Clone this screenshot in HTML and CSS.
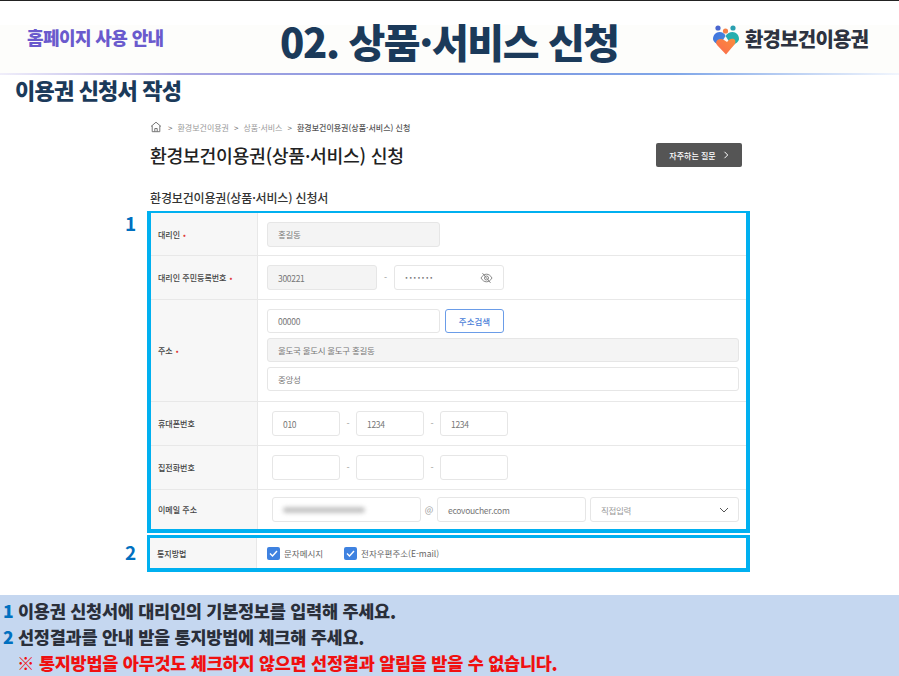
FILE: index.html
```html
<!DOCTYPE html>
<html lang="ko">
<head>
    <meta charset="UTF-8">
    <title>이용권 신청서 작성</title>
    <link rel="stylesheet" href="styles.css">
</head>
<body>
    <div class="slide-top">
        <div class="header">
            <div class="guide">홈페이지 사용 안내</div>
            <h1>02. 상품·서비스 신청</h1>
            <div class="logo">
                <svg width="28" height="30" viewBox="0 0 28 30">
                    <defs>
                        <linearGradient id="lobe-left" x1="0" y1="0" x2="1" y2="1">
                            <stop offset="0" stop-color="#3f6fe0"/>
                            <stop offset="1" stop-color="#4a90d8"/>
                        </linearGradient>
                        <linearGradient id="lobe-right" x1="0" y1="0" x2="1" y2="1">
                            <stop offset="0" stop-color="#27a9b5"/>
                            <stop offset="1" stop-color="#22b5a5"/>
                        </linearGradient>
                        <linearGradient id="lobe-low" x1="1" y1="0" x2="0" y2="1">
                            <stop offset="0" stop-color="#fb8c3c"/>
                            <stop offset="1" stop-color="#fb6a4e"/>
                        </linearGradient>
                    </defs>
                    <circle cx="6" cy="3" r="2.600" fill="#4a66cf"/>
                    <circle cx="13.500" cy="6" r="2.600" fill="#f58048"/>
                    <circle cx="21" cy="3" r="2.600" fill="#2a9fb0"/>
                    <path d="M1 14c0-4 3-7 6.500-7 3 0 5 1.500 6 4l-6 10-4.500-3.500C1.500 16 1 15 1 14z" fill="url(#lobe-left)"/>
                    <path d="M27 14c0-4-3-7-6.500-7-3 0-5 1.500-7 4l6.500 10 5-3.500c1.500-1.500 2-2.500 2-3.500z" fill="url(#lobe-right)"/>
                    <path d="M14 29.500 5 20c-1.500-2-1-4 .5-5 2-1.500 4.500-1.500 6.500 0l3 2c2-3 4.500-4 7-3 1.500 1 2 3 .5 5.500z" fill="url(#lobe-low)"/>
                </svg>
                <span>환경보건이용권</span>
            </div>
        </div>
        <div class="header-line"></div>
    </div>
    <h2 class="section-title">이용권 신청서 작성</h2>

    <div class="page">
        <div class="breadcrumb">
            <svg class="home" width="12" height="12" viewBox="0 0 12 12" fill="none" stroke="#777" stroke-width="1">
                <path d="M1 5.500 6 1.200l5 4.300M2.200 4.700v6h7.600v-6M4.800 10.700V7.500h2.400v3.200"/>
            </svg>
            <span class="sep">&gt;</span><span>환경보건이용권</span>
            <span class="sep">&gt;</span><span>상품·서비스</span>
            <span class="sep">&gt;</span><span class="current">환경보건이용권(상품·서비스) 신청</span>
        </div>
        <div class="title-row">
            <h3>환경보건이용권(상품·서비스) 신청</h3>
            <a class="faq">자주하는 질문 <svg width="6" height="8" viewBox="0 0 6 8" fill="none" stroke="#fff" stroke-width="1"><path d="M1.500 .8 4.700 4 1.500 7.200"/></svg></a>
        </div>
        <h4>환경보건이용권(상품·서비스) 신청서</h4>
    </div>

    <div class="form-wrap">
        <div class="group group-one">
            <span class="num">1</span>
            <div class="row row-first">
                <div class="label">대리인 <i>•</i></div>
                <div class="cell">
                    <div class="input off w-173">홍길동</div>
                </div>
            </div>
            <div class="row row-std">
                <div class="label">대리인 주민등록번호 <i>•</i></div>
                <div class="cell">
                    <div class="input off w-110">300221</div>
                    <span class="dash dash-wide">-</span>
                    <div class="input w-110 secret">
                        <span>·······</span>
                        <svg width="13" height="12" viewBox="0 0 13 12" fill="none" stroke="#888" stroke-width="1">
                            <path d="M1 6c1.500-2.500 3.300-3.800 5.500-3.800S10.500 3.500 12 6c-1.500 2.500-3.300 3.800-5.500 3.800S2.500 8.500 1 6z"/>
                            <circle cx="6.500" cy="6" r="2"/>
                            <path d="M2.500 1.200l8 9.600"/>
                        </svg>
                    </div>
                </div>
            </div>
            <div class="row row-addr">
                <div class="label">주소 <i>•</i></div>
                <div class="cell addr">
                    <div class="addr-top">
                        <div class="input w-173">00000</div>
                        <div class="btn-search">주소검색</div>
                    </div>
                    <div class="input off">울도국 울도시 울도구 홍길동</div>
                    <div class="input">중앙성</div>
                </div>
            </div>
            <div class="row row-std">
                <div class="label">휴대폰번호</div>
                <div class="cell inset">
                    <div class="input w-68">010</div>
                    <span class="dash">-</span>
                    <div class="input w-68">1234</div>
                    <span class="dash">-</span>
                    <div class="input w-68">1234</div>
                </div>
            </div>
            <div class="row row-std">
                <div class="label">집전화번호</div>
                <div class="cell inset">
                    <div class="input w-68"></div>
                    <span class="dash">-</span>
                    <div class="input w-68"></div>
                    <span class="dash">-</span>
                    <div class="input w-68"></div>
                </div>
            </div>
            <div class="row row-last">
                <div class="label">이메일 주소</div>
                <div class="cell inset">
                    <div class="input w-149"><span class="blurred"></span></div>
                    <span class="at">@</span>
                    <div class="input w-149">ecovoucher.com</div>
                    <div class="input w-149 select">
                        <span>직접입력</span>
                        <svg width="10" height="6" viewBox="0 0 10 6" fill="none" stroke="#555" stroke-width="1"><path d="M1 1l4 4 4-4"/></svg>
                    </div>
                </div>
            </div>
        </div>

        <div class="group group-two">
            <span class="num">2</span>
            <div class="row row-notify">
                <div class="label">통지방법</div>
                <div class="cell">
                    <label class="check"><b class="box"><svg width="9" height="7" viewBox="0 0 9 7" fill="none" stroke="#fff" stroke-width="1.400"><path d="M1 3.500 3.500 6 8 1"/></svg></b>문자메시지</label>
                    <label class="check"><b class="box"><svg width="9" height="7" viewBox="0 0 9 7" fill="none" stroke="#fff" stroke-width="1.400"><path d="M1 3.500 3.500 6 8 1"/></svg></b>전자우편주소(E-mail)</label>
                </div>
            </div>
        </div>
    </div>

    <div class="notes">
        <p><span class="n">1</span>이용권 신청서에 대리인의 기본정보를 입력해 주세요.</p>
        <p><span class="n">2</span>선정결과를 안내 받을 통지방법에 체크해 주세요.</p>
        <p class="warn">※ 통지방법을 아무것도 체크하지 않으면 선정결과 알림을 받을 수 없습니다.</p>
    </div>
</body>
</html>
```

FILE: styles.css
```css
* {
    box-sizing: border-box;
}

html, body {
    margin: 0;
    padding: 0;
}

body {
    width: 899px;
    height: 676px;
    overflow: hidden;
    background: #ffffff;
    border-top: 1px solid #222222;
    font-family: "Noto Sans CJK KR", "Noto Sans", sans-serif;
    color: #333333;
}

/* top band */
.slide-top {
    padding-top: 24px;
}

.header {
    height: 48px;
    background: #fdfdfb;
    display: flex;
    align-items: flex-start;
    position: relative;
}

.guide {
    margin: 0 0 0 27px;
    width: 253px;
    font-size: 18px;
    line-height: 24px;
    font-weight: 900;
    letter-spacing: -0.6px;
    color: #6a5acd;
}

.header h1 {
    margin: -4px 0 0;
    font-size: 40px;
    font-weight: 900;
    line-height: 40px;
    letter-spacing: -1.400px;
    color: #1b3a5a;
    white-space: nowrap;
}

.logo {
    position: absolute;
    left: 712px;
    top: 0;
    display: flex;
    align-items: flex-start;
    gap: 5px;
    font-size: 20px;
    line-height: 28px;
    font-weight: 900;
    letter-spacing: -0.8px;
    color: #2d3340;
}

.logo svg {
    display: block;
}

.header-line {
    height: 2px;
    background: linear-gradient(to right, #f0eefa, #a9a5e2 20%, #8095e0 50%, #7fa6e8 75%, #f2f6fd);
}

.section-title {
    margin: 1px 0 0 15px;
    font-size: 22px;
    font-weight: 900;
    line-height: 26px;
    letter-spacing: -0.8px;
    color: #1b3a5a;
}

/* page heading */
.page {
    margin-left: 150px;
    width: 592px;
}

.breadcrumb {
    margin-top: 18px;
    height: 14px;
    display: flex;
    align-items: center;
    gap: 5px;
    font-size: 8px;
    color: #999999;
}

.breadcrumb .home {
    margin-right: 1px;
}

.breadcrumb .sep {
    color: #666666;
}

.breadcrumb .current {
    color: #555555;
    font-weight: 500;
}

.title-row {
    display: flex;
    justify-content: space-between;
    align-items: center;
    margin-top: 7px;
    height: 28px;
}

.title-row h3 {
    margin: 0;
    font-size: 18.300px;
    font-weight: 500;
    letter-spacing: -0.3px;
    color: #222222;
}

.faq {
    width: 86px;
    height: 24px;
    background: #555555;
    border-radius: 2px;
    display: flex;
    align-items: center;
    justify-content: center;
    gap: 7px;
    font-size: 8px;
    font-weight: 500;
    color: #ffffff;
}

h4 {
    margin: 20px 0 0;
    font-size: 12px;
    line-height: 18px;
    font-weight: 500;
    letter-spacing: -0.15px;
    color: #333333;
}

/* form groups */
.form-wrap {
    margin: 4px 0 0 147px;
    width: 603px;
}

.group {
    position: relative;
    border: 4px solid #00b0f0;
    background: #ffffff;
}

.group-one {
    border-top-width: 2px;
}

.group-two {
    margin-top: 2px;
    border-width: 3px 4px 4px 3px;
}

.num {
    position: absolute;
    left: -26px;
    top: 0;
    font-size: 19px;
    font-weight: 700;
    line-height: 20px;
    color: #0070c0;
}

.group-two .num {
    left: -25px;
    top: 4px;
}

.row {
    display: flex;
    border-bottom: 1px solid #e8e8e8;
}

.row:last-child {
    border-bottom: 0;
}

.row-first {
    height: 43px;
}

.row-std {
    height: 44px;
}

.row-addr {
    height: 102px;
}

.row-last {
    height: 39px;
}

.row-notify {
    height: 30px;
}

.label {
    width: 107px;
    flex: none;
    padding-left: 7px;
    display: flex;
    align-items: center;
    gap: 3px;
    background: #f7f7f7;
    border-right: 1px solid #e8e8e8;
    font-size: 8px;
    font-weight: 500;
    color: #444444;
}

.label i {
    font-style: normal;
    color: #e03c3c;
}

.cell {
    flex: 1;
    padding-left: 9px;
    display: flex;
    align-items: center;
}

.cell.inset {
    padding-left: 14px;
}

.input {
    height: 25px;
    border: 1px solid #e6e6e6;
    border-radius: 3px;
    background: #ffffff;
    padding: 0 10px;
    display: flex;
    align-items: center;
    font-size: 8.500px;
    letter-spacing: -0.3px;
    color: #777777;
    flex: none;
}

.input.off {
    background: #f4f4f4;
}

.w-173 {
    width: 173px;
}

.w-110 {
    width: 110px;
}

.w-68 {
    width: 68px;
}

.w-149 {
    width: 149px;
}

.dash {
    width: 16px;
    text-align: center;
    font-size: 9px;
    color: #999999;
}

.dash-wide {
    width: 17px;
}

.secret, .select {
    justify-content: space-between;
}

.secret {
    font-size: 9px;
    font-weight: 700;
    letter-spacing: 1.200px;
}

.secret svg, .select svg {
    flex: none;
}

.select {
    margin-left: 4px;
    color: #999999;
    padding-right: 9px;
}

.at {
    width: 16px;
    text-align: center;
    font-size: 9px;
    color: #999999;
}

.blurred {
    display: block;
    width: 82px;
    height: 6px;
    border-radius: 3px;
    background: #c4c4c4;
    filter: blur(2px);
}

.addr {
    flex-direction: column;
    align-items: stretch;
    justify-content: flex-start;
    gap: 5px;
    padding: 9px 7px 0 9px;
}

.addr-top {
    display: flex;
    gap: 5px;
}

.addr .input {
    height: 24px;
}

.btn-search {
    width: 59px;
    height: 24px;
    border: 1px solid #6a9ce8;
    border-radius: 3px;
    display: flex;
    align-items: center;
    justify-content: center;
    font-size: 8.500px;
    font-weight: 500;
    color: #4a80d8;
}

.check {
    display: flex;
    align-items: center;
    gap: 4px;
    margin-right: 21px;
    font-size: 8.500px;
    color: #666666;
}

.row-notify .cell {
    padding-left: 10px;
}

.box {
    width: 13px;
    height: 13px;
    border-radius: 2px;
    background: #3f82e0;
    display: flex;
    align-items: center;
    justify-content: center;
}

/* bottom notes */
.notes {
    position: absolute;
    left: 0;
    top: 595px;
    width: 899px;
    height: 81px;
    padding: 3px 0 0 3px;
    background: #c5d7f0;
    font-size: 17.500px;
    font-weight: 900;
    letter-spacing: -0.25px;
    color: #2a2f3a;
}

.notes p {
    margin: 0;
    line-height: 26px;
    white-space: nowrap;
}

.notes .n {
    display: inline-block;
    width: 15px;
    color: #0070c0;
}

.notes .warn {
    margin-left: 14px;
    color: #f01010;
}
```
